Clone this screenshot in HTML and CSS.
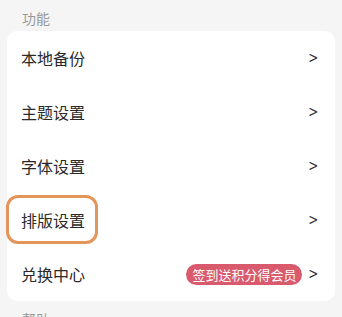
FILE: index.html
```html
<!DOCTYPE html>
<html lang="zh">
<head>
  <meta charset="UTF-8" />
  <meta name="viewport" content="width=device-width, initial-scale=1.0"/>
  <title>设置</title>
  <link rel="stylesheet" href="styles.css">
</head>
<body>
  <div class="section-title">功能</div>
  <div class="card">
    <div class="row"><span class="label">本地备份</span><span class="chev">&gt;</span></div>
    <div class="row"><span class="label">主题设置</span><span class="chev">&gt;</span></div>
    <div class="row"><span class="label">字体设置</span><span class="chev">&gt;</span></div>
    <div class="row"><span class="label marked">排版设置</span><span class="chev">&gt;</span></div>
    <div class="row"><span class="label">兑换中心</span><span class="badge">签到送积分得会员</span><span class="chev">&gt;</span></div>
  </div>
  <div class="section-title">帮助</div>
</body>
</html>
```

FILE: styles.css
```css
* { box-sizing: border-box; margin: 0; padding: 0; }
body { font-family: "Noto Sans CJK SC", "Noto Sans", sans-serif; background: #f5f5f5; color: #2a2a2a; padding: 0 7px; }
.section-title { font-size: 14px; color: #999; padding: 6px 0 0 15px; height: 31px; line-height: 24px; }
.card { background: #fff; border-radius: 10px; }
.row { height: 54px; display: flex; align-items: center; padding: 0 15px 0 14px; font-size: 16px; }
.label { flex: 1; position: relative; }
.marked::after {
  content: "";
  position: absolute;
  left: -15px; top: -13px; bottom: -12px;
  width: 92px;
  box-sizing: border-box;
  border: 3.5px solid #e3955a;
  border-radius: 12px;
}
.badge { background: #d85a6c; color: #fff; font-size: 13px; border-radius: 11px; height: 21px; line-height: 21px; padding: 0 6px; margin-right: 5px; }
.chev { font-family: "DejaVu Sans", sans-serif; font-size: 15px; color: #333; transform: scaleX(0.8); }
```
